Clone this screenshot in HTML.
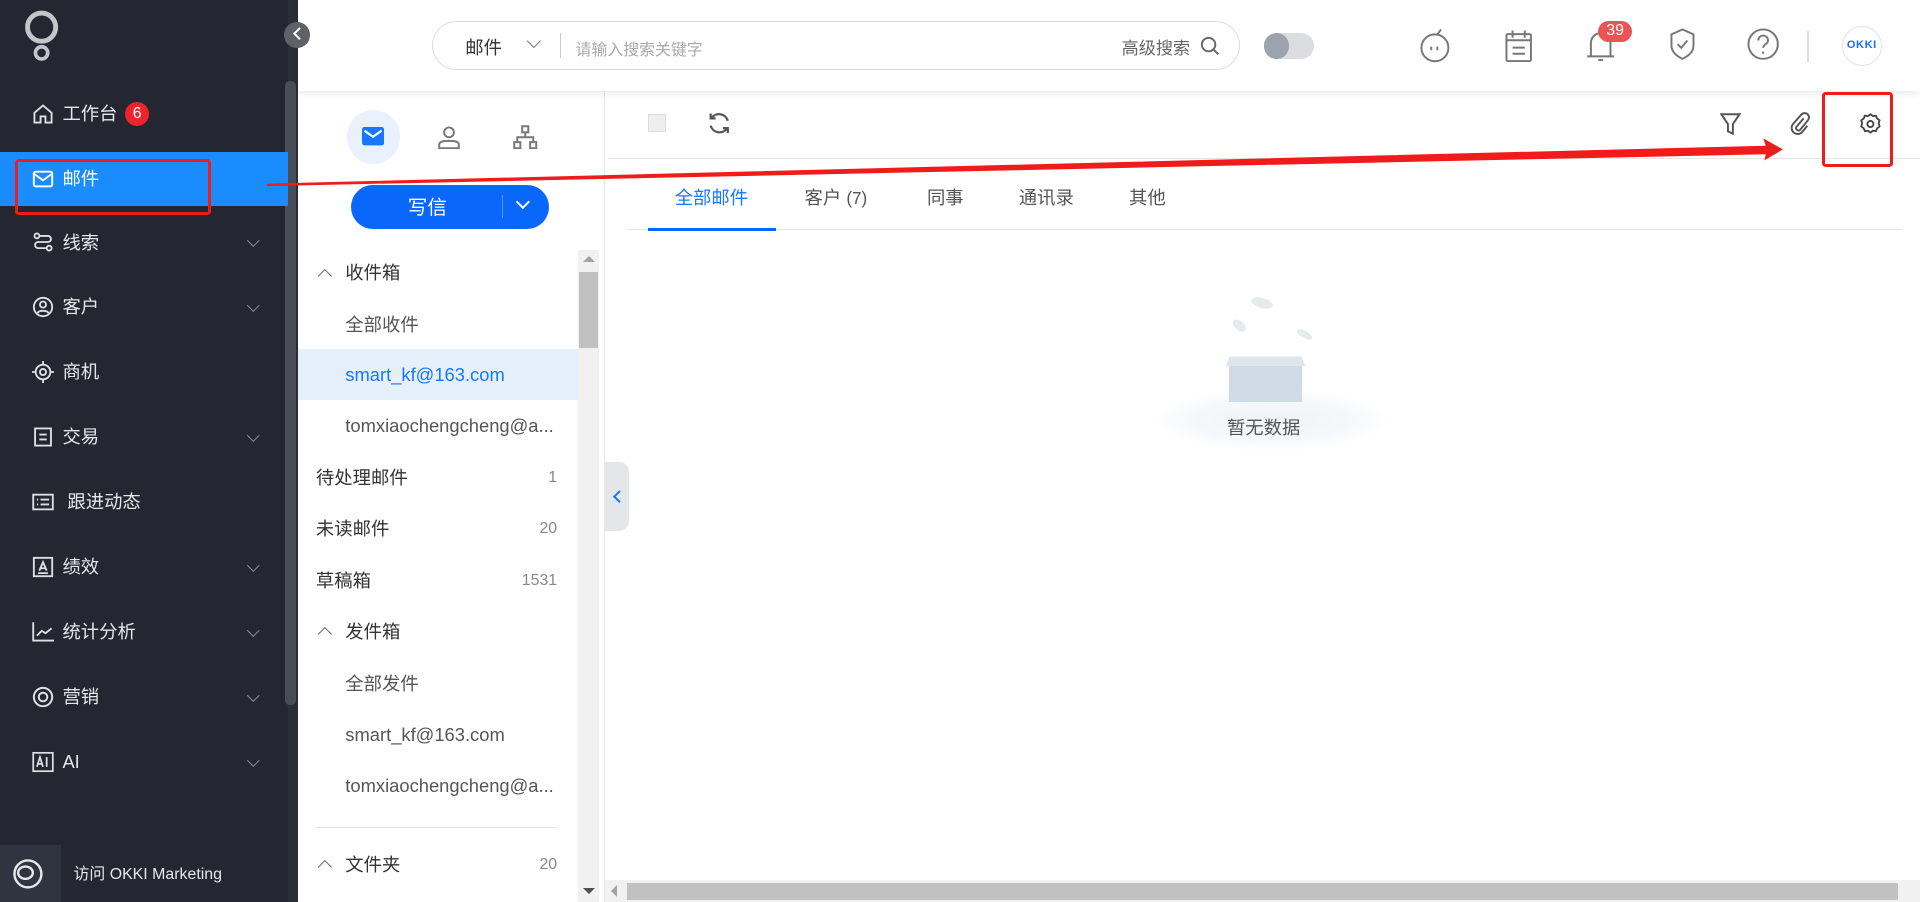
<!DOCTYPE html>
<html><head><meta charset="utf-8"><style>
*{box-sizing:border-box;margin:0;padding:0}
html,body{width:1920px;height:902px;overflow:hidden;background:#fff}
#w{zoom:1.22449;width:1568px;height:737px;position:relative;overflow:hidden;font-family:"Liberation Sans","Noto Sans CJK SC",sans-serif;color:#333}
.a{position:absolute}
.side{left:0;top:0;width:243px;height:737px;background:#242731}
.mi{position:absolute;left:0;width:235px;height:44px;color:#e6e7ea;font-size:15px;line-height:44px}
.mi svg{position:absolute;left:26px;top:13px}
.mi span{position:absolute;left:51px}
.mi i{position:absolute;left:203px;top:17px;width:7px;height:7px;border-right:1.5px solid #8a8d94;border-bottom:1.5px solid #8a8d94;transform:rotate(45deg)}
.li{position:absolute;left:243px;width:229px;height:42px;line-height:42px;font-size:15px;color:#333}
.li .c{position:absolute;right:17px;font-size:13px;color:#888}
.chev{position:absolute;left:18px;top:19px;width:8px;height:8px;border-left:1.5px solid #666;border-top:1.5px solid #666;transform:rotate(45deg)}
.tab{position:absolute;top:150px;font-size:15px;color:#555}
</style></head><body><div id="w">
<!-- sidebar -->
<div class="a side"></div>
<div class="a" style="left:235px;top:0;width:8px;height:737px;background:#2b2e37"></div>
<div class="a" style="left:233px;top:66px;width:9px;height:510px;background:#4a4d56;border-radius:4px"></div>
<svg class="a" style="left:18px;top:8px" width="32" height="44" viewBox="0 0 32 44"><circle cx="16" cy="14" r="11.5" fill="none" stroke="#c4c5c9" stroke-width="4"/><circle cx="16" cy="35" r="5" fill="none" stroke="#c4c5c9" stroke-width="3"/></svg>
<div class="a" style="left:232px;top:18px;width:21px;height:21px;border-radius:50%;background:#5f6167;z-index:4"></div>
<div class="a" style="left:241px;top:24px;width:7px;height:7px;border-left:2px solid #fff;border-bottom:2px solid #fff;transform:rotate(45deg);z-index:4"></div>

<div class="mi" style="top:71px"><svg width="18" height="18" viewBox="0 0 18 18" fill="none" stroke="#dfe0e3" stroke-width="1.5"><path d="M2 8L9 2l7 6v8h-5v-5H7v5H2z"/></svg><span>工作台</span><b style="position:absolute;left:102px;top:12px;width:20px;height:20px;border-radius:50%;background:#f0222c;color:#fff;font-size:13px;line-height:20px;text-align:center;font-weight:normal">6</b></div>
<div class="mi" style="top:124px;background:#1a8cfe;color:#fff"><svg width="18" height="18" viewBox="0 0 18 18" fill="none" stroke="#fff" stroke-width="1.6"><rect x="1.5" y="3" width="15" height="12" rx="1.5"/><path d="M2 5l7 5 7-5"/></svg><span>邮件</span></div>
<div class="mi" style="top:176px"><svg width="18" height="18" viewBox="0 0 18 18" fill="none" stroke="#dfe0e3" stroke-width="1.5"><circle cx="4" cy="4" r="2"/><circle cx="14" cy="14" r="2"/><path d="M6 4h7a2.5 2.5 0 010 5H5a2.5 2.5 0 000 5h7"/></svg><span>线索</span><i></i></div>
<div class="mi" style="top:229px"><svg width="18" height="18" viewBox="0 0 18 18" fill="none" stroke="#dfe0e3" stroke-width="1.5"><circle cx="9" cy="9" r="7.5"/><circle cx="9" cy="7" r="2.5"/><path d="M4.5 14c1-2.5 8-2.5 9 0"/></svg><span>客户</span><i></i></div>
<div class="mi" style="top:282px"><svg width="18" height="18" viewBox="0 0 18 18" fill="none" stroke="#dfe0e3" stroke-width="1.5"><circle cx="9" cy="9" r="6"/><circle cx="9" cy="9" r="2.5"/><path d="M9 0v3M9 15v3M0 9h3M15 9h3"/></svg><span>商机</span></div>
<div class="mi" style="top:335px"><svg width="18" height="18" viewBox="0 0 18 18" fill="none" stroke="#dfe0e3" stroke-width="1.5"><rect x="2.5" y="2" width="13" height="14"/><path d="M6 7h6M6 11h6"/></svg><span>交易</span><i></i></div>
<div class="mi" style="top:388px"><svg width="18" height="18" viewBox="0 0 18 18" fill="none" stroke="#dfe0e3" stroke-width="1.5"><rect x="1" y="3" width="16" height="12"/><path d="M4 7h1M7 7h7M4 11h1M7 11h7"/></svg><span style="left:55px">跟进动态</span></div>
<div class="mi" style="top:441px"><svg width="18" height="18" viewBox="0 0 18 18" fill="none" stroke="#dfe0e3" stroke-width="1.5"><rect x="1.5" y="1.5" width="15" height="15"/><path d="M6 12l3-7 3 7M7 10h4M5 14h8"/></svg><span>绩效</span><i></i></div>
<div class="mi" style="top:494px"><svg width="18" height="18" viewBox="0 0 18 18" fill="none" stroke="#dfe0e3" stroke-width="1.5"><path d="M1 1v15h17M4 12l4-4 3 2 5-4"/></svg><span>统计分析</span><i></i></div>
<div class="mi" style="top:547px"><svg width="18" height="18" viewBox="0 0 18 18" fill="none" stroke="#dfe0e3" stroke-width="1.6"><circle cx="9" cy="9" r="7.5"/><circle cx="9" cy="9" r="3.5"/></svg><span>营销</span><i></i></div>
<div class="mi" style="top:600px"><svg width="18" height="18" viewBox="0 0 18 18" fill="none" stroke="#dfe0e3" stroke-width="1.4"><rect x="1" y="1.5" width="16" height="15"/><path d="M4 13l2.5-8 2.5 8M5 10.5h3M12 5v8"/></svg><span>AI</span><i></i></div>
<div class="a" style="left:0;top:690px;width:50px;height:47px;background:#2f3440"></div>
<svg class="a" style="left:10px;top:701px" width="26" height="26" viewBox="0 0 26 26" fill="none" stroke="#e6e6e6" stroke-width="2"><circle cx="13" cy="13" r="11"/><ellipse cx="11" cy="12" rx="6" ry="5"/></svg>
<div class="a" style="left:60px;top:703px;font-size:13px;color:#e6e7ea">访问 OKKI Marketing</div>

<!-- header -->
<div class="a" style="left:243px;top:0;width:1325px;height:74px;background:#fff;box-shadow:0 2px 6px rgba(0,0,0,.1);z-index:2">
<div class="a" style="left:110px;top:17px;width:660px;height:40px;border:1px solid #dcdcdc;border-radius:20px"></div>
<div class="a" style="left:137px;top:28px;font-size:15px;color:#333">邮件</div>
<div class="a" style="left:189px;top:29px;width:8px;height:8px;border-right:1.5px solid #777;border-bottom:1.5px solid #777;transform:rotate(45deg)"></div>
<div class="a" style="left:214px;top:27px;width:1px;height:20px;background:#ccc"></div>
<div class="a" style="left:227px;top:30px;font-size:13px;color:#aaa">请输入搜索关键字</div>
<div class="a" style="left:673px;top:28px;font-size:14px;color:#666">高级搜索</div>
<svg class="a" style="left:737px;top:29px" width="16" height="16" viewBox="0 0 16 16" fill="none" stroke="#666" stroke-width="1.6"><circle cx="7" cy="7" r="5.5"/><path d="M11 11l4 4"/></svg>
<div class="a" style="left:789px;top:27px;width:41px;height:21px;border-radius:11px;background:#dcdde0"></div>
<div class="a" style="left:789px;top:27px;width:21px;height:21px;border-radius:50%;background:#9da3ae"></div>
<svg class="a" style="left:916px;top:22px" width="26" height="30" viewBox="0 0 26 30" fill="none" stroke="#777" stroke-width="1.6"><circle cx="13" cy="17" r="11"/><path d="M15 6l3-4M10 16v3M15 16v3"/></svg>
<svg class="a" style="left:985px;top:23px" width="24" height="28" viewBox="0 0 24 28" fill="none" stroke="#777" stroke-width="1.6"><rect x="2" y="5" width="20" height="22" rx="1"/><path d="M7 2v6M17 2v6M2 10h20M7 16h10M7 21h10"/></svg>
<svg class="a" style="left:1052px;top:22px" width="24" height="30" viewBox="0 0 24 30" fill="none" stroke="#777" stroke-width="1.6"><path d="M4 24V13a8 8 0 0116 0v11M1 24h22M10 27h4"/></svg>
<div class="a" style="left:1062px;top:17px;width:28px;height:17px;border-radius:9px;background:#ea5455;color:#fff;font-size:13px;line-height:17px;text-align:center">39</div>
<svg class="a" style="left:1120px;top:22px" width="22" height="28" viewBox="0 0 22 28" fill="none" stroke="#777" stroke-width="1.6"><path d="M11 2l9 4v9c0 6-5 9-9 11-4-2-9-5-9-11V6z"/><path d="M7 14l3 3 5-6"/></svg>
<svg class="a" style="left:1183px;top:22px" width="28" height="28" viewBox="0 0 28 28" fill="none" stroke="#777" stroke-width="1.6"><circle cx="14" cy="14" r="12"/><path d="M10 11a4 4 0 118 0c0 3-4 3-4 6M14 20v2"/></svg>
<div class="a" style="left:1233px;top:25px;width:1px;height:26px;background:#ddd"></div>
<div class="a" style="left:1261px;top:21px;width:33px;height:33px;border-radius:50%;border:1px solid #e4e4e4;font-size:9px;font-weight:bold;color:#1a6ff0;line-height:31px;text-align:center;letter-spacing:.5px">OKKI</div>
</div>

<!-- mail panel -->
<div class="a" style="left:283px;top:90px;width:44px;height:44px;border-radius:50%;background:#e8f1fd"></div>
<svg class="a" style="left:296px;top:104px" width="18" height="15" viewBox="0 0 18 15"><rect x="0" y="0" width="18" height="15" rx="2" fill="#1677ff"/><path d="M2 3l7 5 7-5" fill="none" stroke="#fff" stroke-width="1.8"/></svg>
<svg class="a" style="left:358px;top:102px" width="18" height="20" viewBox="0 0 18 20" fill="none" stroke="#777" stroke-width="1.6"><circle cx="9" cy="6" r="4"/><path d="M1 19v-3c0-2 2-3 8-3s8 1 8 3v3z"/></svg>
<svg class="a" style="left:419px;top:102px" width="20" height="20" viewBox="0 0 20 20" fill="none" stroke="#777" stroke-width="1.6"><rect x="7.5" y="1" width="5" height="5"/><rect x="1" y="14" width="5" height="5"/><rect x="14" y="14" width="5" height="5"/><path d="M10 6v4M3.5 14v-4h13v4"/></svg>
<div class="a" style="left:287px;top:151px;width:161px;height:36px;border-radius:18px;background:#0a67fb"></div>
<div class="a" style="left:333px;top:156px;color:#fff;font-size:16px">写信</div>
<div class="a" style="left:410px;top:159px;width:1px;height:19px;background:#5b98fb"></div>
<div class="a" style="left:423px;top:161px;width:8px;height:8px;border-right:2px solid #fff;border-bottom:2px solid #fff;transform:rotate(45deg)"></div>

<div class="li" style="top:202px"><i class="chev"></i><span style="position:absolute;left:39px">收件箱</span></div>
<div class="li" style="top:244px;color:#555"><span style="position:absolute;left:39px">全部收件</span></div>
<div class="li" style="top:285px;background:#e6f0fd;color:#1677ff"><span style="position:absolute;left:39px">smart_kf@163.com</span></div>
<div class="li" style="top:327px;color:#555"><span style="position:absolute;left:39px">tomxiaochengcheng@a...</span></div>
<div class="li" style="top:369px"><span style="position:absolute;left:15px">待处理邮件</span><span class="c">1</span></div>
<div class="li" style="top:411px"><span style="position:absolute;left:15px">未读邮件</span><span class="c">20</span></div>
<div class="li" style="top:453px"><span style="position:absolute;left:15px">草稿箱</span><span class="c">1531</span></div>
<div class="li" style="top:495px"><i class="chev"></i><span style="position:absolute;left:39px">发件箱</span></div>
<div class="li" style="top:537px;color:#555"><span style="position:absolute;left:39px">全部发件</span></div>
<div class="li" style="top:579px;color:#555"><span style="position:absolute;left:39px">smart_kf@163.com</span></div>
<div class="li" style="top:621px;color:#555"><span style="position:absolute;left:39px">tomxiaochengcheng@a...</span></div>
<div class="a" style="left:258px;top:675px;width:197px;height:1px;background:#e4e4e4"></div>
<div class="li" style="top:685px"><i class="chev"></i><span style="position:absolute;left:39px">文件夹</span><span class="c">20</span></div>
<div class="a" style="left:472px;top:204px;width:17px;height:533px;background:#f1f1f1"></div>
<div class="a" style="left:473px;top:222px;width:15px;height:62px;background:#c1c1c1"></div>
<div class="a" style="left:476px;top:209px;border:5px solid transparent;border-bottom:5px solid #a3a3a3;border-top:0"></div>
<div class="a" style="left:476px;top:725px;border:5px solid transparent;border-top:5px solid #505050;border-bottom:0"></div>
<div class="a" style="left:493px;top:74px;width:1px;height:663px;background:#e8e8e8"></div>
<div class="a" style="left:494px;top:377px;width:20px;height:57px;background:#e4e6ea;border-radius:0 8px 8px 0"></div>
<div class="a" style="left:502px;top:402px;width:7px;height:7px;border-left:2px solid #1677ff;border-bottom:2px solid #1677ff;transform:rotate(45deg)"></div>

<!-- main -->
<div class="a" style="left:529px;top:93px;width:15px;height:15px;border:1px solid #ddd;background:#eee"></div>
<svg class="a" style="left:577px;top:91px" width="20" height="20" viewBox="0 0 20 20" fill="none" stroke="#555" stroke-width="1.8"><path d="M17 8A7.5 7.5 0 003.5 6M3 12a7.5 7.5 0 0013.5 2"/><path d="M3 2v4h4M17 18v-4h-4"/></svg>
<svg class="a" style="left:1405px;top:92px" width="17" height="19" viewBox="0 0 17 19" fill="none" stroke="#555" stroke-width="1.6"><path d="M1 1h15l-5.5 8v8l-4-2V9z"/></svg>
<svg class="a" style="left:1461px;top:91px" width="17" height="20" viewBox="0 0 17 20" fill="none" stroke="#555" stroke-width="1.6"><path d="M12 6l-6 7a2 2 0 003 2.5l6.5-8a3.5 3.5 0 00-5.5-4.5L3 11a5 5 0 007.5 6.5L15 12"/></svg>
<svg class="a" style="left:1519px;top:92px" width="17" height="18" viewBox="0 0 17 18" fill="none" stroke="#444" stroke-width="1.5"><path d="M8.5 1l2 1.5 2.5-.3 1 2.3 2 1.5-.8 2.5.8 2.5-2 1.5-1 2.3-2.5-.3-2 1.5-2-1.5-2.5.3-1-2.3-2-1.5.8-2.5L1 6l2-1.5 1-2.3 2.5.3z"/><circle cx="8.5" cy="9" r="2.5"/></svg>
<div class="a" style="left:497px;top:129px;width:1071px;height:1px;background:#e6e6e6"></div>
<div class="tab" style="left:551px;color:#1677ff">全部邮件</div>
<div class="tab" style="left:657px">客户 <span style="font-size:14px">(7)</span></div>
<div class="tab" style="left:757px">同事</div>
<div class="tab" style="left:832px">通讯录</div>
<div class="tab" style="left:922px">其他</div>
<div class="a" style="left:513px;top:187px;width:1040px;height:1px;background:#e3e3e3"></div>
<div class="a" style="left:529px;top:186px;width:105px;height:3px;background:#0a67fb"></div>

<!-- empty -->
<div class="a" style="left:943px;top:318px;width:190px;height:50px;border-radius:50%;background:radial-gradient(ellipse at center,#eef3f8 0%,#f6f9fb 50%,rgba(255,255,255,0) 72%)"></div>
<div class="a" style="left:1001px;top:291px;width:65px;height:8px;background:#dfe6ed;clip-path:polygon(5% 0,95% 0,100% 100%,0 100%)"></div>
<div class="a" style="left:1004px;top:299px;width:59px;height:29px;background:#cfdbe6"></div>
<div class="a" style="left:1022px;top:243px;width:18px;height:8px;border-radius:50%;background:#e5eaef;transform:rotate(15deg)"></div>
<div class="a" style="left:1006px;top:262px;width:12px;height:7px;border-radius:50%;background:#e5eaef;transform:rotate(40deg)"></div>
<div class="a" style="left:1058px;top:270px;width:14px;height:6px;border-radius:50%;background:#e5eaef;transform:rotate(30deg)"></div>
<div class="a" style="left:1002px;top:338px;font-size:15px;color:#555">暂无数据</div>

<!-- bottom scrollbar -->
<div class="a" style="left:494px;top:719px;width:1074px;height:18px;background:#f1f1f1"></div>
<div class="a" style="left:512px;top:721px;width:1038px;height:14px;background:#c1c1c1"></div>
<div class="a" style="left:499px;top:723px;border:5px solid transparent;border-right:5px solid #a3a3a3;border-left:0"></div>

<!-- annotations -->
<div class="a" style="left:12px;top:130px;width:160px;height:46px;border:3px solid #f01c1c;border-radius:3px;z-index:5"></div>
<div class="a" style="left:1488px;top:75px;width:58px;height:61px;border:3px solid #f01c1c;border-radius:3px;z-index:5"></div>
<svg class="a" style="left:0;top:0;z-index:5" width="1568" height="737"><polygon points="218,150 1442,119 1440,113 1456,122 1441,131 1442,126 218,152" fill="#f01c1c"/></svg>
</div></body></html>
